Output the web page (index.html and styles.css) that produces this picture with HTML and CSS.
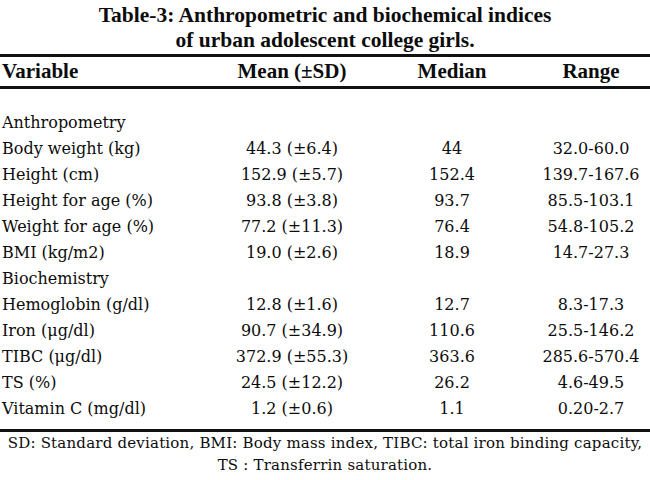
FILE: index.html
```html
<!DOCTYPE html>
<html>
<head>
<meta charset="utf-8">
<link rel="stylesheet" href="styles.css">
</head>
<body>
<div class="page">
  <h1 class="title">Table-3: Anthropometric and biochemical indices<br>of urban adolescent college girls.</h1>
  <table class="data">
    <colgroup>
      <col class="c-var"><col class="c-mean"><col class="c-med"><col class="c-range">
    </colgroup>
    <thead>
      <tr><th class="var">Variable</th><th>Mean (±SD)</th><th>Median</th><th>Range</th></tr>
    </thead>
    <tbody>
      <tr class="first"><td class="var">Anthropometry</td><td></td><td></td><td></td></tr>
      <tr><td class="var">Body weight (kg)</td><td>44.3 (±6.4)</td><td>44</td><td>32.0-60.0</td></tr>
      <tr><td class="var">Height (cm)</td><td>152.9 (±5.7)</td><td>152.4</td><td>139.7-167.6</td></tr>
      <tr><td class="var">Height for age (%)</td><td>93.8 (±3.8)</td><td>93.7</td><td>85.5-103.1</td></tr>
      <tr><td class="var">Weight for age (%)</td><td>77.2 (±11.3)</td><td>76.4</td><td>54.8-105.2</td></tr>
      <tr><td class="var">BMI (kg/m2)</td><td>19.0 (±2.6)</td><td>18.9</td><td>14.7-27.3</td></tr>
      <tr><td class="var">Biochemistry</td><td></td><td></td><td></td></tr>
      <tr><td class="var">Hemoglobin (g/dl)</td><td>12.8 (±1.6)</td><td>12.7</td><td>8.3-17.3</td></tr>
      <tr><td class="var">Iron (μg/dl)</td><td>90.7 (±34.9)</td><td>110.6</td><td>25.5-146.2</td></tr>
      <tr><td class="var">TIBC (μg/dl)</td><td>372.9 (±55.3)</td><td>363.6</td><td>285.6-570.4</td></tr>
      <tr><td class="var">TS (%)</td><td>24.5 (±12.2)</td><td>26.2</td><td>4.6-49.5</td></tr>
      <tr class="last"><td class="var">Vitamin C (mg/dl)</td><td>1.2 (±0.6)</td><td>1.1</td><td>0.20-2.7</td></tr>
    </tbody>
  </table>
  <p class="note">SD: Standard deviation, BMI: Body mass index, TIBC: total iron binding capacity,<br>TS : Transferrin saturation.</p>
</div>
</body>
</html>
```
FILE: styles.css
```css
html, body {
  margin: 0;
  padding: 0;
  background: #ffffff;
}

.page {
  width: 650px;
  height: 480px;
  overflow: hidden;
  color: #0c0c0c;
  font-family: "DejaVu Serif", "Liberation Serif", serif;
}

.title {
  margin: 0;
  padding-top: 3px;
  font-family: "Liberation Serif", serif;
  font-weight: bold;
  font-size: 21.5px;
  line-height: 25px;
  text-align: center;
}

.data {
  margin-top: 1px;
  width: 650px;
  border-collapse: collapse;
  table-layout: fixed;
}

.c-var { width: 212px; }
.c-mean { width: 160px; }
.c-med { width: 160px; }
.c-range { width: 118px; }

.data th {
  font-family: "Liberation Serif", serif;
  font-weight: bold;
  font-size: 21px;
  height: 29px;
  line-height: 29px;
  padding: 0;
  text-align: center;
  border-top: 3px solid #111;
  border-bottom: 3px solid #111;
}

.data td {
  font-size: 16px;
  height: 26px;
  line-height: 26px;
  padding: 0;
  text-align: center;
  white-space: nowrap;
}

.data .var {
  text-align: left;
  padding-left: 2px;
}

.data tr.first td {
  padding-top: 21px;
}

.data tr.last td {
  padding-bottom: 7px;
  border-bottom: 3px solid #111;
}

.note {
  margin: 0;
  font-size: 15px;
  letter-spacing: 0.2px;
  line-height: 22px;
  text-align: center;
  white-space: nowrap;
}
```
